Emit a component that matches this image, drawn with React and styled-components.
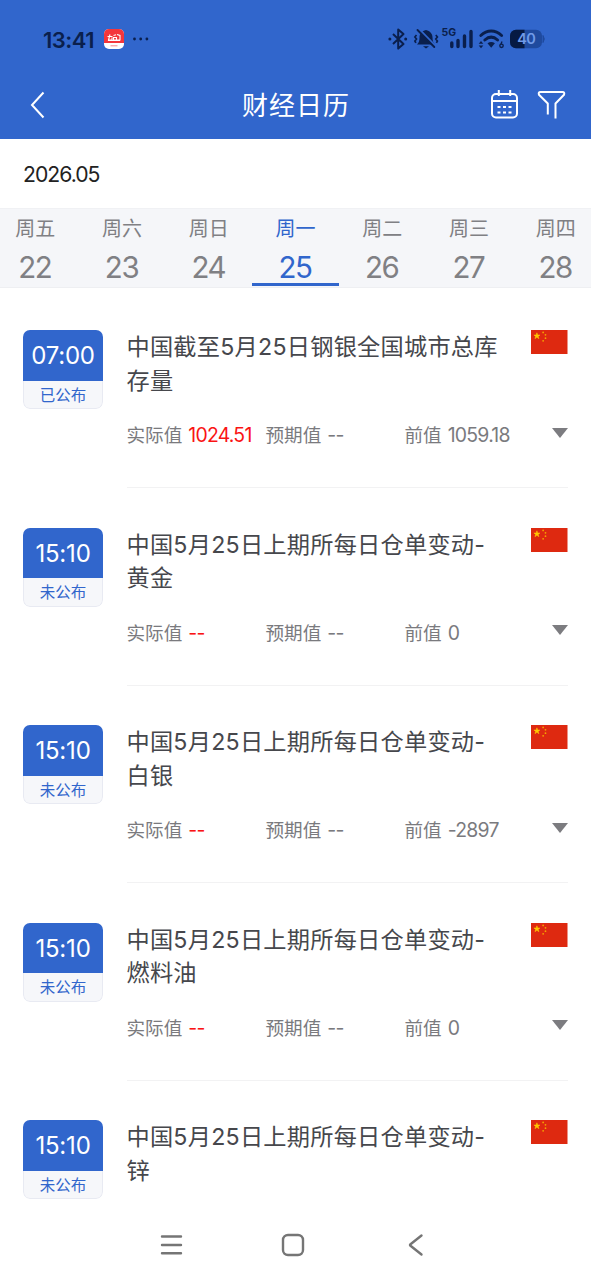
import React, { useState } from 'react';
import styled, { createGlobalStyle } from 'styled-components';

const GlobalStyle = createGlobalStyle`
	* {
		box-sizing: border-box;
	}

	body {
		margin: 0;
		background-color: #fff;
		font-family: Inter, 'Noto Sans CJK SC', sans-serif;
		font-weight: 390;
	}
`;

const Screen = styled.div`
	width: 591px;
	height: 1280px;
	display: flex;
	flex-direction: column;
	overflow: hidden;
	background-color: #fff;
`;

const Top = styled.header`
	flex: none;
	height: 139px;
	background-color: #3166cc;
	color: #fff;
`;

const StatusBar = styled.div`
	height: 70px;
	padding: 8px 46px 0 43px;
	display: flex;
	align-items: center;
	justify-content: space-between;
	color: #0a1f4d;
`;

const StatusGroup = styled.div`
	display: flex;
	align-items: center;
`;

const Clock = styled.span`
	width: 61px;
	padding-top: 1px;
	font-size: 22px;
	font-weight: 600;
	letter-spacing: -0.5px;
	white-space: nowrap;
`;

const AppBadge = styled.span`
	width: 20px;
	height: 20px;
	border-radius: 5px;
	overflow: hidden;
	display: flex;
	flex-direction: column;
	background-color: #fff;
	margin-right: 8px;

	svg {
		display: block;
	}
`;

const TitleBar = styled.div`
	height: 69px;
	padding: 0 25px 0 24px;
	display: grid;
	grid-template-columns: 100px 1fr 100px;
	align-items: center;
`;

const Title = styled.h1`
	margin: 0;
	padding: 2px 0 0 2px;
	font-size: 26px;
	line-height: 36px;
	font-weight: 400;
	letter-spacing: 1px;
	text-align: center;
`;

const Actions = styled.div`
	display: flex;
	justify-content: flex-end;
	gap: 18px;
`;

const IconButton = styled.button`
	border: 0;
	padding: 0;
	background: none;
	color: inherit;
	display: flex;
	cursor: pointer;
`;

const Month = styled.div`
	flex: none;
	height: 69px;
	padding: 1px 0 0 23px;
	display: flex;
	align-items: center;
	font-size: 21.2px;
	font-weight: 400;
	letter-spacing: -1px;
	color: #222;
`;

const Week = styled.div`
	flex: none;
	height: 80px;
	margin: 0 -8px;
	display: grid;
	grid-template-columns: repeat(7, 1fr);
	background-color: #f5f6f9;
	border-top: 1px solid #f0f1f4;
	border-bottom: 1px solid #eeeff2;
`;

const Day = styled.div`
	height: 77px;
	display: flex;
	flex-direction: column;
	align-items: center;
	cursor: pointer;
	color: ${(props) => (props.$active ? '#3166cc' : '#808084')};
	box-shadow: ${(props) => (props.$active ? 'inset 0 -3px #3166cc' : 'none')};
`;

const DayName = styled.span`
	padding-top: 1px;
	font-size: 20px;
	line-height: 38px;
`;

const DayNumber = styled.span`
	margin-right: 1px;
	font-size: 29.5px;
	line-height: 38px;
	letter-spacing: -1.4px;
`;

const List = styled.main`
	flex: 1;
	min-height: 0;
	overflow: hidden;
	padding: 2.5px 23.5px 0 23px;
`;

const Row = styled.article`
	height: 197.6px;
	padding-top: 39.5px;
	display: flex;
	gap: 23.5px;
`;

const TimeCard = styled.div`
	flex: none;
	width: 80px;
	height: 79px;
	border-radius: 7px;
	overflow: hidden;
	text-align: center;
`;

const Time = styled.div`
	height: 50.5px;
	line-height: 51px;
	font-size: 24px;
	letter-spacing: -0.2px;
	background-color: #3166cc;
	color: #fff;
`;

const Status = styled.div`
	height: 28.5px;
	line-height: 29px;
	font-size: 15.5px;
	color: #3166cc;
	background-color: #f6f7fa;
	border: 1px solid #e8eaf2;
	border-top: 0;
	border-radius: 0 0 7px 7px;
`;

const Details = styled.div`
	flex: 1;
	display: flex;
	flex-direction: column;
	border-bottom: 1px solid #f2f2f3;
`;

const Heading = styled.div`
	height: 67px;
	display: flex;
	justify-content: space-between;
	align-items: flex-start;
`;

const Name = styled.h2`
	margin: 0;
	padding-top: 1px;
	width: 376px;
	font-size: 23.2px;
	line-height: 33.6px;
	font-weight: 390;
	letter-spacing: 0.25px;
	color: #46474c;
`;

const Values = styled.div`
	margin-top: 23px;
	display: grid;
	grid-template-columns: 139px 139px 1fr 16px;
	align-items: center;
	line-height: 30px;
	font-size: 18.6px;
	color: #7a7a7e;
	white-space: nowrap;
`;

const Figure = styled.span`
	margin-left: 6px;
	font-size: 19.4px;
	letter-spacing: -0.75px;
	color: ${(props) => (props.$actual ? '#fa1414' : 'inherit')};
`;

const Caret = styled.span`
	border-left: 8px solid transparent;
	border-right: 8px solid transparent;
	border-top: 10px solid #7c7c80;
	margin-top: -5px;
`;

const SystemNav = styled.nav`
	flex: none;
	height: 70px;
	padding: 0 165px 0 160px;
	display: grid;
	grid-template-columns: 121px 1fr 19px;
	align-items: center;
	color: #757575;
`;

const days = [
	['周五', 22],
	['周六', 23],
	['周日', 24],
	['周一', 25],
	['周二', 26],
	['周三', 27],
	['周四', 28],
];

const events = [
	{ time: '07:00', status: '已公布', name: '中国截至5月25日钢银全国城市总库存量', actual: '1024.51', forecast: '--', previous: '1059.18' },
	{ time: '15:10', status: '未公布', name: '中国5月25日上期所每日仓单变动-黄金', actual: '--', forecast: '--', previous: '0' },
	{ time: '15:10', status: '未公布', name: '中国5月25日上期所每日仓单变动-白银', actual: '--', forecast: '--', previous: '-2897' },
	{ time: '15:10', status: '未公布', name: '中国5月25日上期所每日仓单变动-燃料油', actual: '--', forecast: '--', previous: '0' },
	{ time: '15:10', status: '未公布', name: '中国5月25日上期所每日仓单变动-锌' },
];

const Flag = () => (
	<svg width="36.5" height="24" viewBox="0 0 37 24" preserveAspectRatio="none">
		<rect width="37" height="24" fill="#de2910" />
		<path d="M6 2.8l.8 2.2h2.3L7.3 6.4 8 8.7 6 7.3 4 8.7l.7-2.3L2.9 5h2.3z" fill="#ffc800" stroke="#ffc800" strokeWidth=".5" />
		<g fill="#f5a400">
			<circle cx="12.3" cy="2.4" r=".9" />
			<circle cx="14.7" cy="4.8" r=".9" />
			<circle cx="14.7" cy="8.2" r=".9" />
			<circle cx="12.3" cy="10.8" r=".9" />
		</g>
	</svg>
);

const AppIcon = () => (
	<svg width="20" height="20" viewBox="0 0 20 20">
		<path d="M0 0h20v14H0z" fill="#f4363c" />
		<path d="M3.500 7.500h5M6 5.500L4.500 11H8V8.500M9.500 6.500l2.500-.8M9.500 8.500h3V11h-3zM13 5.500l3 1V11h-3M4 11.500h12" stroke="#fff" strokeWidth="1.100" fill="none" />
		<path d="M6.500 16.800h7" stroke="#f58a8d" strokeWidth="1" />
	</svg>
);

const StatusIcons = () => (
	<svg width="157" height="26" viewBox="388 26 157 26" fill="none" stroke="currentColor">
		{/* bluetooth */}
		<path d="M393 34l10.500 10-5.300 4.600V29.400l5.300 4.600L393 44" strokeWidth="2" strokeLinejoin="round" />
		<circle cx="389.900" cy="39" r="1.500" fill="currentColor" stroke="none" />
		<circle cx="405.700" cy="39" r="1.500" fill="currentColor" stroke="none" />
		{/* muted bell */}
		<path d="M417 44.500c2-2 2.500-4 2.500-7 0-4 2.500-6.500 6.500-7.500 4 1 6.500 3.500 6.500 7.500 0 3 .5 5 2.500 7z" fill="currentColor" stroke="none" />
		<path d="M423 46.200h6l-3 2.200z" fill="currentColor" stroke="none" />
		<path d="M419.500 29.500l16.500 17" stroke="#3166cc" strokeWidth="2" />
		<path d="M417.500 30l16.800 17" strokeWidth="1.900" strokeLinecap="round" />
		<path d="M416.500 35l-1.600 2 1.600 2-1.600 2 1 1.800M435.800 35l1.600 2-1.600 2 1.600 2-1 1.800" strokeWidth="1.700" />
		{/* signal */}
		<path d="M451.800 43v3.500M458 40.500v6M464.500 36v10.500M471 31.500v15" strokeWidth="3.400" strokeLinecap="round" />
		{/* wifi */}
		<path d="M480.800 35.500c6.300-6 14.500-6 20.800 0" strokeWidth="2.900" strokeLinecap="round" />
		<path d="M484.800 40c4-3.600 8.800-3.600 12.800 0" strokeWidth="2.900" strokeLinecap="round" />
		<path d="M487.500 43.300q3.700-2.800 7.400 0l-3.700 4.500z" fill="currentColor" stroke="none" />
		<path d="M481 41l2.300 2.800h-4.600zM481 48.300l2.300-2.800h-4.600z" fill="currentColor" stroke="none" />
		<path d="M502 41.500l-1.200 3" strokeWidth="1.300" />
		<circle cx="501.500" cy="45.800" r="1.700" strokeWidth="1.400" />
		{/* battery */}
		<rect x="510" y="29.800" width="32" height="18.400" rx="6" fill="#1f4a9e" stroke="none" />
		<path d="M543 35.500q2.500 3.500 0 7z" fill="#1f4a9e" stroke="#1f4a9e" />
		<path d="M524.500 29.800H516a6 6 0 0 0-6 6v6.400a6 6 0 0 0 6 6h8.500z" fill="#061a43" stroke="none" />
		<text x="526.300" y="44.300" textAnchor="middle" fontSize="14.500" fontWeight="600" letterSpacing="-.5" fill="#709be8" stroke="none">40</text>
		<text x="441.500" y="35.800" fontSize="10.500" fontWeight="700" fill="currentColor" stroke="none">5G</text>
	</svg>
);

const EventRow = ({ event }) => (
	<Row>
		<TimeCard>
			<Time>{event.time}</Time>
			<Status>{event.status}</Status>
		</TimeCard>
		<Details>
			<Heading>
				<Name>{event.name}</Name>
				<Flag />
			</Heading>
			{event.actual && (
				<Values>
					<span>
						实际值<Figure $actual>{event.actual}</Figure>
					</span>
					<span>
						预期值<Figure>{event.forecast}</Figure>
					</span>
					<span>
						前值<Figure>{event.previous}</Figure>
					</span>
					<Caret />
				</Values>
			)}
		</Details>
	</Row>
);

const App = () => {
	const [selected, setSelected] = useState(25);

	return (
		<Screen>
			<GlobalStyle />
			<Top>
				<StatusBar>
					<StatusGroup>
						<Clock>13:41</Clock>
						<AppBadge>
							<AppIcon />
						</AppBadge>
						<svg width="18" height="4" viewBox="0 0 18 4" fill="currentColor">
							<circle cx="2.500" cy="2" r="1.400" />
							<circle cx="8.700" cy="2" r="1.400" />
							<circle cx="14.900" cy="2" r="1.400" />
						</svg>
					</StatusGroup>
					<StatusIcons />
				</StatusBar>
				<TitleBar>
					<IconButton aria-label="back">
						<svg width="28" height="28" viewBox="0 0 28 28" fill="none" stroke="currentColor" strokeWidth="2">
							<path d="M19.500 1.500L8 14l11.500 12.500" />
						</svg>
					</IconButton>
					<Title>财经日历</Title>
					<Actions>
						<IconButton aria-label="calendar">
							<svg width="29" height="31" viewBox="0 0 29 31" fill="none" stroke="currentColor" strokeWidth="2">
								<rect x="2" y="5" width="25" height="23.500" rx="4" />
								<path d="M2 12h25M8.800 1v6M20.200 1v6" />
								<path d="M7.500 18h3M13 18h3M18.500 18h3M7.500 23.500h3M13 23.500h3M18.500 23.500h3" strokeWidth="2.200" />
							</svg>
						</IconButton>
						<IconButton aria-label="filter">
							<svg width="29" height="31" viewBox="0 0 29 31" fill="none" stroke="currentColor" strokeWidth="2">
								<path d="M10.800 25.500V14.500L2 5.800Q1 3 3.500 3H25.500Q28 3 27 5.800L18.500 14.500V29.500" strokeLinejoin="round" />
							</svg>
						</IconButton>
					</Actions>
				</TitleBar>
			</Top>
			<Month>2026.05</Month>
			<Week>
				{days.map(([name, number]) => (
					<Day key={number} $active={number === selected} onClick={() => setSelected(number)}>
						<DayName>{name}</DayName>
						<DayNumber>{number}</DayNumber>
					</Day>
				))}
			</Week>
			<List>
				{events.map((event) => (
					<EventRow key={event.name} event={event} />
				))}
			</List>
			<SystemNav>
				<svg width="23" height="22" viewBox="0 0 23 22" stroke="currentColor" strokeWidth="2.400" strokeLinecap="round">
					<path d="M2 2.500h19M2 11h19M2 19.300h19" />
				</svg>
				<svg width="24" height="24" viewBox="0 0 24 24" fill="none" stroke="currentColor" strokeWidth="2.400">
					<rect x="2" y="2" width="20" height="20" rx="5" />
				</svg>
				<svg width="19" height="24" viewBox="0 0 19 24" fill="none" stroke="currentColor" strokeWidth="2.400" strokeLinecap="round" strokeLinejoin="round">
					<path d="M14.500 2.500L3.500 11.200q-1 .8 0 1.600L14.500 21.500" />
				</svg>
			</SystemNav>
		</Screen>
	);
};

export default App;
